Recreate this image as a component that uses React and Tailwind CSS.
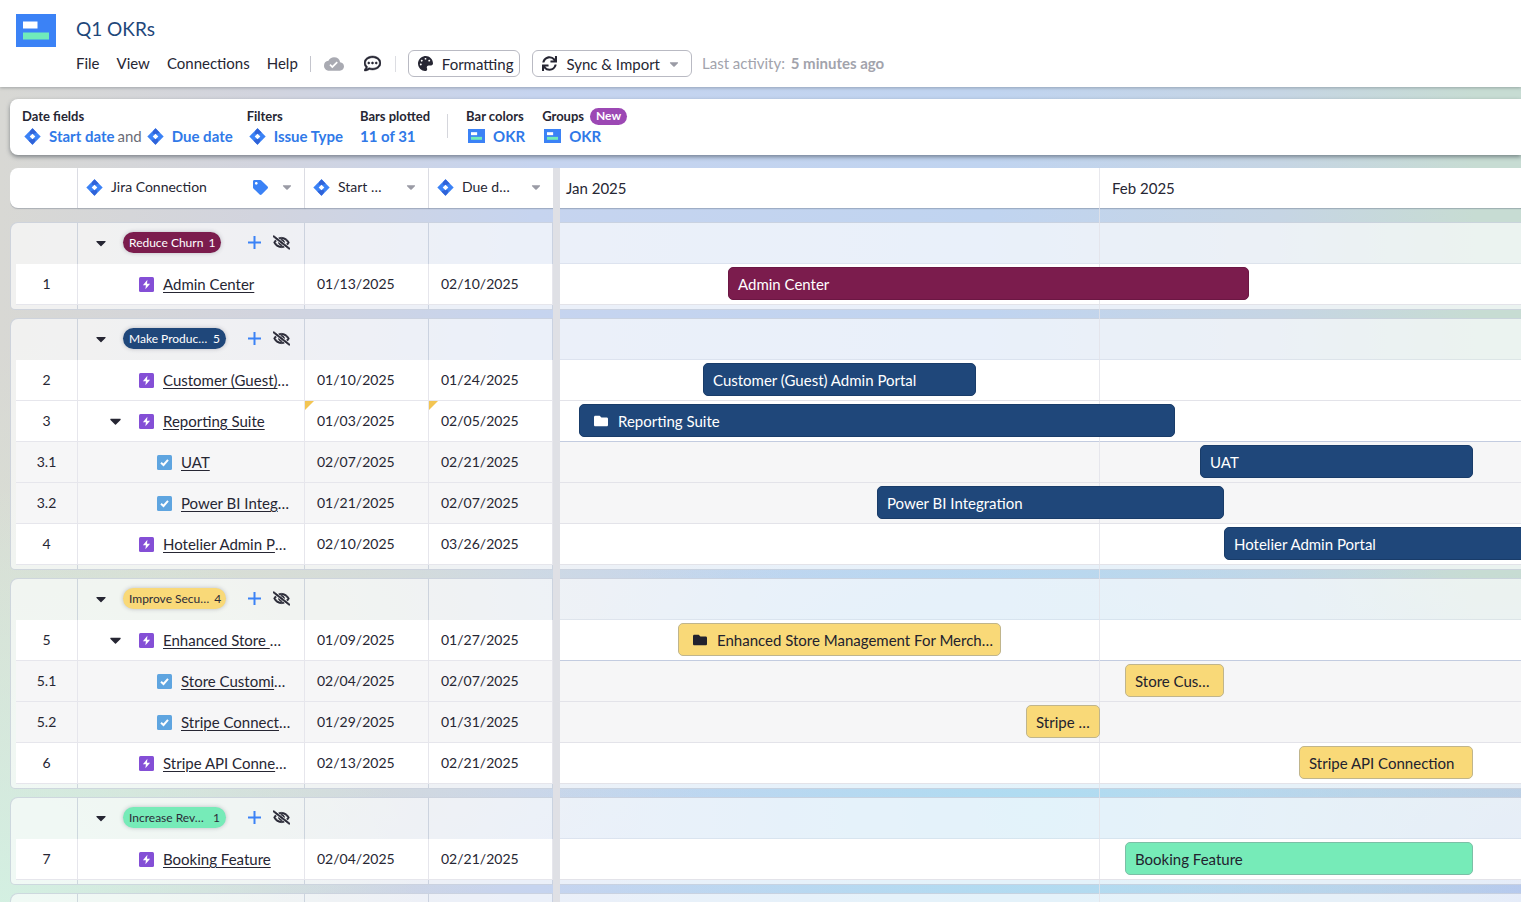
import React from "react";
import clsx from "clsx";
import {
  FaPalette,
  FaSync,
  FaCaretDown,
  FaTag,
  FaRegCommentDots,
  FaRegEyeSlash,
  FaFolder,
} from "react-icons/fa";
import { MdCloudDone } from "react-icons/md";

const DAY_WIDTH = 24.82;
const FIRST_DAY_OFFSET = 19;
const FIRST_DAY = Date.UTC(2025, 0, 3);
const MS_PER_DAY = 86400000;

function toUtc(text) {
  const [month, day, year] = text.split("/").map(Number);
  return Date.UTC(year, month - 1, day);
}

// Weekends are hidden on the timeline, so only working days take up width.
function workdayIndex(time) {
  let index = 0;
  for (let t = FIRST_DAY; t < time; t += MS_PER_DAY) {
    const weekday = new Date(t).getUTCDay();
    if (weekday !== 0 && weekday !== 6) index += 1;
  }
  return index;
}

function barPlace(start, due) {
  const from = workdayIndex(toUtc(start));
  const to = workdayIndex(toUtc(due)) + 1;
  const left = Math.round(FIRST_DAY_OFFSET + from * DAY_WIDTH);
  const right = Math.round(FIRST_DAY_OFFSET + to * DAY_WIDTH);
  return { marginLeft: left, width: right - left };
}

const GROUPS = [
  {
    label: "Reduce Churn",
    count: 1,
    tone: "maroon",
    rows: [
      { id: "1", name: "Admin Center", bar: "Admin Center", start: "01/13/2025", due: "02/10/2025" },
    ],
  },
  {
    label: "Make Produc…",
    count: 5,
    tone: "navy",
    rows: [
      { id: "2", name: "Customer (Guest)", cut: true, bar: "Customer (Guest) Admin Portal", start: "01/10/2025", due: "01/24/2025" },
      { id: "3", name: "Reporting Suite", bar: "Reporting Suite", start: "01/03/2025", due: "02/05/2025", parent: true, flagged: true },
      { id: "3.1", name: "UAT", bar: "UAT", start: "02/07/2025", due: "02/21/2025", child: true },
      { id: "3.2", name: "Power BI Integ", cut: true, bar: "Power BI Integration", start: "01/21/2025", due: "02/07/2025", child: true },
      { id: "4", name: "Hotelier Admin P", cut: true, bar: "Hotelier Admin Portal", start: "02/10/2025", due: "03/26/2025" },
    ],
  },
  {
    label: "Improve Secu…",
    count: 4,
    tone: "yellow",
    rows: [
      { id: "5", name: "Enhanced Store ", cut: true, bar: "Enhanced Store Management For Merch…", start: "01/09/2025", due: "01/27/2025", parent: true },
      { id: "5.1", name: "Store Customi", cut: true, bar: "Store Cus…", start: "02/04/2025", due: "02/07/2025", child: true },
      { id: "5.2", name: "Stripe Connect", cut: true, bar: "Stripe …", start: "01/29/2025", due: "01/31/2025", child: true },
      { id: "6", name: "Stripe API Conne", cut: true, bar: "Stripe API Connection", start: "02/13/2025", due: "02/21/2025" },
    ],
  },
  {
    label: "Increase Rev…",
    count: 1,
    tone: "green",
    rows: [
      { id: "7", name: "Booking Feature", bar: "Booking Feature", start: "02/04/2025", due: "02/21/2025" },
    ],
  },
  { rows: [] },
];

const PILL_TONES = {
  maroon: "bg-[#7b1c4d] text-white",
  navy: "bg-[#1f477a] text-white",
  yellow: "bg-[#f9d978] text-[#2b2b38]",
  green: "bg-[#76ebb8] text-[#2b2b38]",
};

const BAR_TONES = {
  maroon: "border-[#6b1743] bg-[#7b1c4d] text-white",
  navy: "border-[#193c69] bg-[#1f477a] text-white",
  yellow: "border-[#c0b58c] bg-[#f9d978] text-[#22222e]",
  green: "border-[#7cbfa6] bg-[#76ebb8] text-[#22222e]",
};

function JiraMark() {
  return (
    <svg viewBox="0 0 17 17" className="size-[17px] shrink-0" aria-hidden="true">
      <path d="M8.5 0.3 16.7 8.5 8.5 16.7 0.3 8.5Z" fill="#3b82f6" />
      <path d="M8.5 0.3 12.6 4.4 8.5 6.2 5.6 5.6Q5.6 2.8 8.5 0.3Z" fill="#2f62d8" />
      <path d="M8.5 16.7 4.4 12.6 8.5 10.8 11.4 11.4Q11.4 14.2 8.5 16.7Z" fill="#2f62d8" />
      <path d="M8.5 5.7 11.3 8.5 8.5 11.3 5.7 8.5Z" fill="#fff" />
    </svg>
  );
}

function BoardMark({ className }) {
  return (
    <svg viewBox="0 0 40 33" className={className} preserveAspectRatio="none" aria-hidden="true">
      <rect width="40" height="33" fill="#3b82f6" />
      <rect x="7" y="7.5" width="14.5" height="7" fill="#fff" />
      <rect x="7" y="18.5" width="26" height="7" fill="#70ebba" />
    </svg>
  );
}

function EpicMark() {
  return (
    <svg viewBox="0 0 15 15" className="size-[15px] shrink-0" aria-hidden="true">
      <rect width="15" height="15" rx="1.5" fill="#844fd6" />
      <path d="M8.4 2.8 3.9 8.3H6.9L6.4 12.2 11.1 6.7H8Z" fill="#fff" />
    </svg>
  );
}

function TaskMark() {
  return (
    <svg viewBox="0 0 15 15" className="size-[15px] shrink-0" aria-hidden="true">
      <rect width="15" height="15" rx="1.5" fill="#5fa5e0" />
      <path d="M4 7.8 6.5 10 11 4.9" fill="none" stroke="#fff" strokeWidth="2" />
    </svg>
  );
}

function PlusMark() {
  return (
    <svg viewBox="0 0 13 13" className="size-[13px]" aria-hidden="true">
      <path d="M6.5 0V13M0 6.5H13" stroke="#3b82f6" strokeWidth="2" />
    </svg>
  );
}

function TopBar() {
  return (
    <header className="relative z-10 flex h-[87px] shrink-0 gap-5 bg-white pl-4 pt-[14px] shadow-[0_1px_3px_rgba(60,70,80,0.35)]">
      <BoardMark className="h-[33px] w-10 shrink-0" />
      <div>
        <h1 className="h-8 text-[19px] leading-[30px] text-[#1f477a]">Q1 OKRs</h1>
        <div className="mt-1 flex h-[27px] items-center whitespace-nowrap">
          <nav className="flex gap-[17px] pb-0.5">
            <a href="#file">File</a>
            <a href="#view">View</a>
            <a href="#connections">Connections</a>
            <a href="#help">Help</a>
          </nav>
          <span className="ml-3 h-4 w-px bg-[#c4c5cd]" />
          <MdCloudDone className="ml-[13px] size-5 text-[#a9aab2]" title="Saved" />
          <button type="button" aria-label="Comments" className="ml-5">
            <FaRegCommentDots className="size-[17px]" stroke="currentColor" strokeWidth="16" />
          </button>
          <span className="ml-[14px] h-4 w-px bg-[#dcdde2]" />
          <button type="button" className="ml-3 flex h-[27px] items-center gap-[9px] rounded-md border border-[#b9bac3] pl-[9px] pr-1.5">
            <FaPalette className="size-[15px]" />
            Formatting
          </button>
          <button type="button" className="ml-3 flex h-[27px] items-center gap-[9px] rounded-md border border-[#b9bac3] pl-[9px] pr-3">
            <FaSync className="size-[15px]" />
            Sync &amp; Import
            <FaCaretDown className="h-[14px] w-2.5 text-[#9a9ba5]" />
          </button>
          <p className="ml-2.5 pb-0.5 text-[#a2a3ac]">
            Last activity: <strong className="ml-0.5 font-bold">5 minutes ago</strong>
          </p>
        </div>
      </div>
    </header>
  );
}

function Setting({ label, badge, children }) {
  return (
    <div>
      <div className="flex h-5 items-center gap-1.5 text-[13px] font-bold">
        {label}
        {badge}
      </div>
      <div className="flex h-5 items-center font-bold text-[#3079e8]">{children}</div>
    </div>
  );
}

function SettingsBar() {
  return (
    <section className="relative ml-2.5 mt-3 flex h-14 shrink-0 whitespace-nowrap rounded-l-lg bg-white pl-3 pt-[7px] shadow-[0_2px_4px_rgba(40,50,60,0.5)]">
      <Setting label="Date fields">
        <span className="ml-0.5 flex items-center gap-2">
          <JiraMark />
          <button type="button">Start date</button>
        </span>
        <span className="mx-[3px] font-normal text-[#6b6c76]">and</span>
        <span className="ml-0.5 flex items-center gap-2">
          <JiraMark />
          <button type="button">Due date</button>
        </span>
      </Setting>
      <div className="ml-[14px]">
        <Setting label="Filters">
          <span className="ml-0.5 flex items-center gap-2">
            <JiraMark />
            <button type="button">Issue Type</button>
          </span>
        </Setting>
      </div>
      <div className="ml-[17px]">
        <Setting label="Bars plotted">11 of 31</Setting>
      </div>
      <span className="ml-[17px] mt-2 h-6 w-px bg-[#d5d6dc]" />
      <div className="ml-[18px]">
        <Setting label="Bar colors">
          <span className="ml-0.5 flex items-center gap-2">
            <BoardMark className="h-[14px] w-[17px]" />
            <button type="button">OKR</button>
          </span>
        </Setting>
      </div>
      <div className="ml-[17px]">
        <Setting
          label="Groups"
          badge={
            <span className="flex h-[17px] items-center rounded-full bg-[#9c48b4] px-1.5 text-xs font-bold text-white">
              New
            </span>
          }
        >
          <span className="ml-0.5 flex items-center gap-2">
            <BoardMark className="h-[14px] w-[17px]" />
            <button type="button">OKR</button>
          </span>
        </Setting>
      </div>
    </section>
  );
}

function ColumnHeader({ title, icon, last }) {
  return (
    <th scope="col" className={clsx("h-10 bg-white p-0 font-normal shadow-[0_1px_1px_rgba(90,100,120,0.35)]", !last && "border-r border-[#e4e4ea]")}>
      <div className="flex items-center gap-2 pb-0.5 pl-2 pr-3 text-[14px]">
        <JiraMark />
        <span>{title}</span>
        <span className="ml-auto flex items-center gap-[14px]">
          {icon}
          <button type="button" aria-label={title + " options"}>
            <FaCaretDown className="block h-[14px] w-2.5 text-[#9a9ba5]" />
          </button>
        </span>
      </div>
    </th>
  );
}

function GroupHead({ group }) {
  const cell = "h-[42px] border-t border-r border-t-[#8d9bb5]/35 border-r-[#8d9bb5]/35 bg-white/65 p-0";
  return (
    <tr>
      <td className={clsx(cell, "rounded-tl-lg border-l border-l-[#8d9bb5]/35")} />
      <td className={cell}>
        {group.label && (
          <div className="flex items-center pb-0.5 pl-[17px] pr-[14px]">
            <button type="button" aria-label={"Collapse " + group.label}>
              <FaCaretDown className="block h-4 w-3" />
            </button>
            <span
              className={clsx(
                "ml-4 flex h-[21px] items-center justify-between gap-[5px] whitespace-nowrap rounded-full px-1.5 text-xs shadow-[0_0_4px_rgba(60,60,80,0.3)]",
                group.label.endsWith("…") && "w-[103px]",
                PILL_TONES[group.tone]
              )}
            >
              <span>{group.label}</span>
              <span>{group.count}</span>
            </span>
            <span className="ml-auto flex items-center gap-3">
              <button type="button" aria-label="Add item">
                <PlusMark />
              </button>
              <button type="button" aria-label="Hide group">
                <FaRegEyeSlash className="size-[17px]" stroke="currentColor" strokeWidth="30" />
              </button>
            </span>
          </div>
        )}
      </td>
      <td className={cell} />
      <td className={cell} />
    </tr>
  );
}

function DateCell({ value, flagged, tint }) {
  return (
    <td className={clsx("relative h-[41px] border-b border-r border-[#e6e6ec] p-0 pl-3 text-[14px]", tint)}>
      {flagged && (
        <svg viewBox="0 0 9 9" className="absolute left-0 top-0 size-[9px]" aria-hidden="true">
          <path d="M0 0H9L0 9Z" fill="#f3c552" />
        </svg>
      )}
      {value}
    </td>
  );
}

function ItemRow({ row }) {
  const tint = row.child ? "bg-[#f6f6f7]" : "bg-white";
  return (
    <tr>
      <td className="h-[41px] border-l border-l-[#8d9bb5]/35 bg-white/65 p-0 pl-[5px] text-[14px]">
        <div className={clsx("flex h-[41px] items-center justify-center border-b border-r border-[#e6e6ec]", tint)}>{row.id}</div>
      </td>
      <td className={clsx("h-[41px] border-b border-r border-[#e6e6ec] p-0", tint)}>
        <div className={clsx("flex items-center whitespace-pre", row.child ? "pl-[79px]" : row.parent ? "pl-[31px]" : "pl-[61px]")}>
          {row.parent && (
            <button type="button" aria-label={"Collapse " + row.name} className="mr-[17px]">
              <FaCaretDown className="block h-[18px] w-[13px]" />
            </button>
          )}
          {row.child ? <TaskMark /> : <EpicMark />}
          <a href={"#item-" + row.id} className="ml-[9px] underline underline-offset-2">
            {row.name}
          </a>
          {row.cut && <span>…</span>}
        </div>
      </td>
      <DateCell value={row.start} flagged={row.flagged} tint={tint} />
      <DateCell value={row.due} flagged={row.flagged} tint={tint} />
    </tr>
  );
}

function GroupFoot() {
  const cell = "h-[5px] border-b border-r border-[#8d9bb5]/35 bg-white/65 p-0";
  return (
    <>
      <tr>
        <td className={clsx(cell, "rounded-bl-lg border-l")} />
        <td className={cell} />
        <td className={cell} />
        <td className={cell} />
      </tr>
      <tr>
        <td colSpan={4} className="h-2 p-0" />
      </tr>
    </>
  );
}

function ItemTable() {
  return (
    <table className="w-[543px] shrink-0 table-fixed border-separate border-spacing-0 self-start text-left">
      <colgroup>
        <col className="w-[68px]" />
        <col className="w-[227px]" />
        <col className="w-[124px]" />
        <col className="w-[124px]" />
      </colgroup>
      <thead>
        <tr>
          <td className="h-10 rounded-l-lg border-r border-[#e4e4ea] bg-white p-0 shadow-[0_1px_1px_rgba(90,100,120,0.35)]" />
          <ColumnHeader title="Jira Connection" icon={<FaTag className="size-[15px] text-[#3b82f6]" />} />
          <ColumnHeader title="Start …" />
          <ColumnHeader title="Due d…" last />
        </tr>
        <tr>
          <td colSpan={4} className="h-[14px] p-0" />
        </tr>
      </thead>
      {GROUPS.map((group, index) => (
        <tbody key={index}>
          <GroupHead group={group} />
          {group.rows.map((row) => (
            <ItemRow key={row.id} row={row} />
          ))}
          {group.rows.length > 0 && <GroupFoot />}
        </tbody>
      ))}
    </table>
  );
}

function Timeline() {
  return (
    <div className="relative min-w-0 flex-1 overflow-hidden">
      <div className="flex h-10 items-center bg-white shadow-[0_1px_1px_rgba(90,100,120,0.35)]">
        <span className="w-[540px] shrink-0 pl-1.5">Jan 2025</span>
        <span className="pl-3">Feb 2025</span>
      </div>
      <div className="absolute inset-y-0 left-[539px] z-10 w-px bg-[#e2e2e8]/80" />
      <div className="mt-[14px]">
        {GROUPS.map((group, index) => (
          <div key={index} className="mb-2">
            <div className="h-[42px] border-y border-t-[#8d9bb5]/35 border-b-[#8d9bb5]/15 bg-white/65" />
            {group.rows.map((row) => (
              <div
                key={row.id}
                className={clsx(
                  "h-[41px] border-b pt-[3px]",
                  row.child ? "bg-[#f6f6f7]" : "bg-white",
                  row.parent ? "border-[#c3cce0]" : "border-[#e3e3e9]"
                )}
              >
                <div
                  className={clsx(
                    "relative z-20 flex h-[33px] items-center gap-2.5 whitespace-nowrap rounded-[5px] border",
                    row.parent ? "pl-[14px]" : "pl-[9px]",
                    BAR_TONES[group.tone]
                  )}
                  style={barPlace(row.start, row.due)}
                >
                  {row.parent && <FaFolder className="size-[14px] shrink-0" />}
                  {row.bar}
                </div>
              </div>
            ))}
            {group.rows.length > 0 && <div className="h-[5px] border-b border-[#8d9bb5]/35 bg-white/65" />}
          </div>
        ))}
      </div>
    </div>
  );
}

export default function App() {
  return (
    <div className="flex h-screen flex-col overflow-hidden bg-[radial-gradient(ellipse_500px_420px_at_68%_90%,#afdcf1_0%,rgba(175,220,241,0)_100%),radial-gradient(ellipse_420px_460px_at_0%_105%,#d3f2e3_0%,rgba(211,242,227,0)_100%),radial-gradient(ellipse_400px_330px_at_100%_100%,#b6c9ee_0%,rgba(182,201,238,0)_100%),radial-gradient(ellipse_620px_300px_at_12%_70%,#d9e0d4_0%,rgba(217,224,212,0)_100%),linear-gradient(90deg,#d8d8d4_0%,#d2d4de_17%,#c6d4ef_35%,#c0d4f0_65%,#c6d5e4_84%,#c7dcd3_97%)] font-['Lato',sans-serif] text-[15px] leading-5 text-[#262633]">
      <TopBar />
      <SettingsBar />
      <main className="ml-2.5 mt-[13px] flex min-h-0 flex-1 overflow-hidden">
        <ItemTable />
        <div className="w-[7px] shrink-0 bg-[#dfe0e5]" />
        <Timeline />
      </main>
    </div>
  );
}
